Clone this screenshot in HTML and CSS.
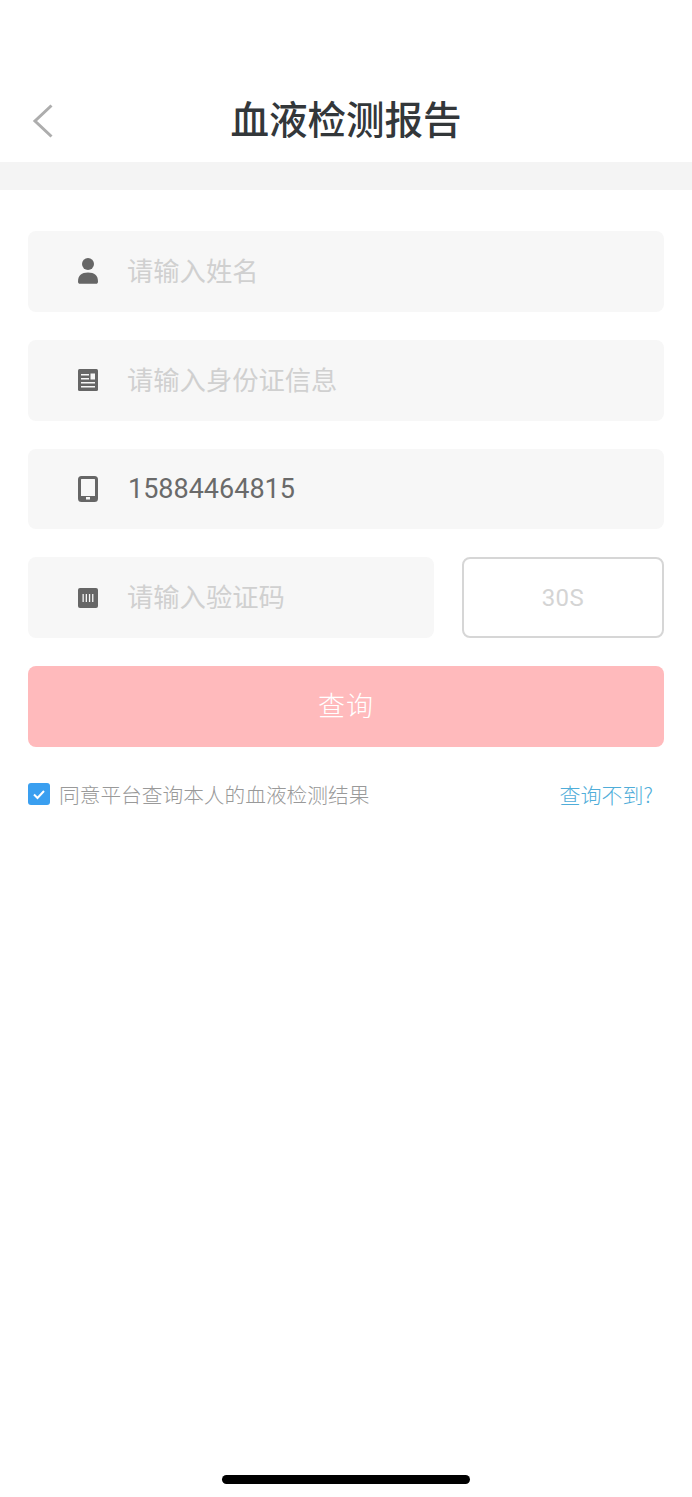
FILE: index.html
```html
<!doctype html>
<html>
<head>
<meta http-equiv="Content-Type" content="text/html; charset=utf-8">
<title>血液检测报告</title>
<link rel="stylesheet" href="styles.css">
</head>
<body>
<div class="page">
	<div class="header">
		<svg class="back" width="22" height="34" viewBox="0 0 22 34"><path d="M19.500 1.500 3 17l16.500 15.500" fill="none" stroke="#adadad" stroke-width="3"/></svg>
		<h1>血液检测报告</h1>
	</div>
	<div class="band"></div>
	<div class="form">
		<div class="field">
			<svg class="icon" width="20" height="26" viewBox="0 0 20 26"><circle cx="10" cy="6" r="6" fill="#666"/><path d="M0 23.500C0 17.500 3.500 14.500 10 14.500s10 3 10 9c0 1.500-.8 2.300-2 2.300H2c-1.200 0-2-.8-2-2.300z" fill="#666"/></svg>
			<span class="hint">请输入姓名</span>
		</div>
		<div class="field">
			<svg class="icon" width="20" height="22" viewBox="0 0 20 22"><rect width="20" height="22" rx="1.500" fill="#666"/><path d="M3 5h8v1.500H3zM3 9h8v1.500H3zM3 13h14v1.500H3zM3 17h14v1.500H3z" fill="#f7f7f7"/><rect x="12.500" y="4.500" width="4.500" height="6" fill="#f7f7f7"/></svg>
			<span class="hint">请输入身份证信息</span>
		</div>
		<div class="field">
			<svg class="icon" width="20" height="26" viewBox="0 0 20 26"><rect x="1.500" y="1.500" width="17" height="23" rx="2" fill="none" stroke="#666" stroke-width="3"/><rect x="1" y="20" width="18" height="5" fill="#666"/><rect x="8" y="21" width="4" height="2.500" fill="#f7f7f7"/></svg>
			<span class="value">15884464815</span>
		</div>
		<div class="code-row">
			<div class="field code-field">
				<svg class="icon" width="20" height="20" viewBox="0 0 20 20"><rect width="20" height="20" rx="2" fill="#666"/><path d="M4.500 6h1.300v8H4.500zM7.700 6H9v8H7.700zM10.900 6h1.300v8h-1.300zM14.100 6h1.300v8h-1.300z" fill="#f7f7f7"/></svg>
				<span class="hint">请输入验证码</span>
			</div>
			<div class="timer">30S</div>
		</div>
		<div class="submit">查询</div>
		<div class="agree">
			<span class="check"><svg width="14" height="12" viewBox="0 0 14 12"><path d="M2 6.500 5.500 10 12 3" fill="none" stroke="#fff" stroke-width="2"/></svg></span>
			<span class="agree-text">同意平台查询本人的血液检测结果</span>
			<span class="link">查询不到?</span>
		</div>
	</div>
	<div class="home-bar"></div>
</div>
</body>
</html>
```

FILE: styles.css
```css
*{
	box-sizing:border-box;
}
html,body{
	margin:0;
	padding:0;
}
body{
	background-color:#fff;
	font-family:"Noto Sans CJK SC","Roboto",sans-serif;
}
.page{
	width:692px;
	height:1497px;
	display:flex;
	flex-direction:column;
	overflow:hidden;
}
.header{
	height:162px;
	padding:76px 0 0 32px;
	position:relative;
	display:flex;
	align-items:flex-start;
}
.back{
	margin-top:28px;
}
.header h1{
	margin:0;
	position:absolute;
	left:0;
	right:0;
	top:89px;
	text-align:center;
	font-size:38.500px;
	line-height:56px;
	font-weight:500;
	color:#33373a;
}
.band{
	height:28px;
	background-color:#f4f4f4;
}
.form{
	flex:1;
	padding:41px 28px 0;
	display:flex;
	flex-direction:column;
	gap:28px;
}
.field{
	height:80.750px;
	background-color:#f7f7f7;
	border-radius:8px;
	display:flex;
	align-items:center;
	padding-left:50px;
}
.icon{
	width:20px;
	flex:none;
	margin-right:30px;
}
.hint{
	font-size:26.300px;
	color:#d0d0d0;
	margin:-4px 0 0 -1px;
}
.value{
	font-family:"Roboto",sans-serif;
	font-size:27px;
	color:#6a6a6a;
}
.code-row{
	display:flex;
	gap:28px;
}
.code-field{
	width:406px;
}
.timer{
	flex:1;
	height:80.750px;
	border:2px solid #d6d6d6;
	border-radius:8px;
	display:flex;
	align-items:center;
	justify-content:center;
	font-family:"Roboto",sans-serif;
	font-size:24px;
	letter-spacing:.5px;
	color:#d4d4d4;
}
.submit{
	height:80.750px;
	padding-bottom:4px;
	background-color:#ffbabc;
	border-radius:8px;
	display:flex;
	align-items:center;
	justify-content:center;
	font-size:27px;
	font-weight:300;
	letter-spacing:1px;
	color:#fff;
}
.agree{
	display:flex;
	align-items:center;
	margin-top:-2px;
	padding-right:11px;
	height:42px;
}
.check{
	width:22px;
	height:22px;
	border-radius:3px;
	background-color:#3a9ff0;
	display:flex;
	align-items:center;
	justify-content:center;
	margin-right:9px;
}
.agree-text{
	flex:1;
	font-size:20.700px;
	font-weight:300;
	color:#999;
}
.link{
	font-size:21px;
	font-weight:300;
	color:#4fadd9;
	margin-left:-1px;
}
.home-bar{
	width:248px;
	height:9px;
	margin:0 auto 13px;
	background-color:#000;
	border-radius:5px;
}
```
